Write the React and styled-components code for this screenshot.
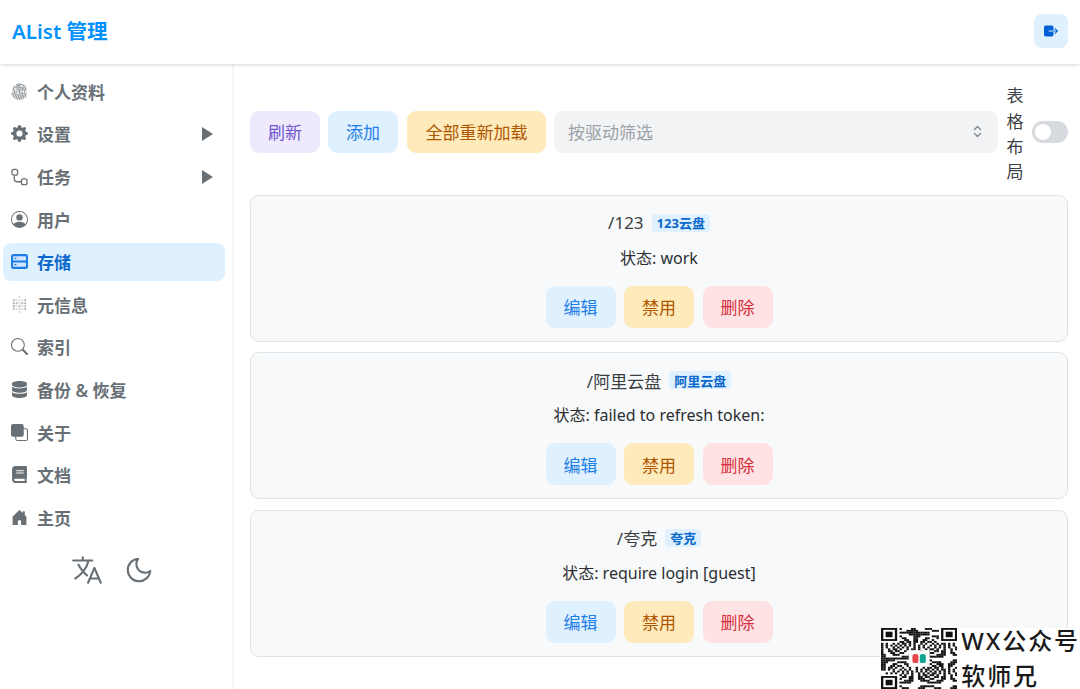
import styled, { createGlobalStyle } from "styled-components";
import {
  BsFingerprint,
  BsGearFill,
  BsPersonCircle,
  BsSearch,
  BsFront,
  BsHouseDoorFill,
} from "react-icons/bs";
import { SiMetabase } from "react-icons/si";
import { FaDatabase, FaBook } from "react-icons/fa";
import { IoLanguageOutline, IoExit } from "react-icons/io5";
import { FiMoon } from "react-icons/fi";
import { ChevronsUpDown } from "lucide-react";

const FONT = `"Noto Sans", "Noto Sans CJK SC", sans-serif`;

const GlobalStyle = createGlobalStyle`
  html, body {
    margin: 0;
    padding: 0;
    background: #fff;
    font-family: ${FONT};
  }
  * {
    box-sizing: border-box;
  }
`;

const Page = styled.div`
  position: relative;
  width: 1080px;
  height: 689px;
  overflow: hidden;
  display: flex;
  flex-direction: column;
  color: #11181c;
`;

const Header = styled.header`
  height: 64px;
  flex-shrink: 0;
  display: flex;
  align-items: center;
  justify-content: space-between;
  padding: 0 12px 4px;
  box-shadow: 0 1px 4px rgba(0, 0, 0, 0.16);
  position: relative;
  z-index: 1;
`;

const Logo = styled.div`
  font-size: 20.5px;
  font-weight: 600;
  color: #0091ff;
`;

const LogoutButton = styled.div`
  width: 34px;
  height: 34px;
  margin-top: 2px;
  border-radius: 8px;
  background: #dff0ff;
  color: #0060d8;
  display: flex;
  align-items: center;
  justify-content: center;
  font-size: 16px;
`;

const Body = styled.div`
  flex: 1;
  display: flex;
  min-height: 0;
`;

const Sidebar = styled.aside`
  width: 234px;
  flex-shrink: 0;
  border-right: 2px solid #f5f6f7;
  padding: 8.4px 7px 0 3px;
`;

const Nav = styled.nav`
  display: flex;
  flex-direction: column;
  gap: 4.6px;
`;

const NavItem = styled.div`
  height: 38px;
  display: flex;
  align-items: center;
  gap: 9px;
  padding: 0 12px 0 8px;
  border-radius: 8px;
  font-size: 17px;
  font-weight: 600;
  background: ${(props) => (props.$active ? "#dff0ff" : "transparent")};
  color: ${(props) => (props.$active ? "#0b68cb" : "#687076")};
`;

const NavIcon = styled.span`
  width: 17px;
  height: 18px;
  flex-shrink: 0;
  display: flex;
  align-items: center;
  justify-content: center;
  font-size: 17px;
  opacity: ${(props) => props.$fade || 1};
  color: ${(props) => (props.$active ? "#1c7ee6" : "inherit")};
`;

const NavLabel = styled.span`
  flex: 1;
`;

const Arrow = styled.span`
  width: 0;
  height: 0;
  border-style: solid;
  border-width: 7.5px 0 7.5px 11px;
  border-color: transparent transparent transparent #687076;
`;

const SideTools = styled.div`
  display: flex;
  justify-content: center;
  align-items: center;
  gap: 20px;
  margin-top: 16.6px;
  padding-right: 4px;
  color: #687076;
`;

const Main = styled.main`
  flex: 1;
  padding: 15.4px 12px 0 16px;
  display: flex;
  flex-direction: column;
  gap: 10.4px;
`;

const Toolbar = styled.div`
  display: flex;
  align-items: center;
  gap: 8px;
`;

const tones = {
  purple: "background: #eee9fd; color: #6e56cf;",
  blue: "background: #dff0ff; color: #1c7ee6;",
  orange: "background: #ffeabb; color: #ad5700;",
  red: "background: #ffe3e4; color: #d5303d;",
};

const Button = styled.button`
  height: 42px;
  padding: 0 18px;
  border: 0;
  border-radius: 9px;
  font-family: ${FONT};
  font-size: 17px;
  white-space: nowrap;
  flex-shrink: 0;
  ${(props) => tones[props.$tone]}
`;

const ReloadButton = styled(Button)`
  padding: 0 18.5px;
  margin-left: 1px;
`;

const Select = styled.div`
  flex: 1;
  height: 42px;
  border-radius: 9px;
  background: #f1f3f5;
  color: #9ba1a6;
  font-size: 17px;
  display: flex;
  align-items: center;
  justify-content: space-between;
  padding: 0 13px 0 14px;
`;

const SwitchLabel = styled.div`
  width: 18px;
  margin-top: 4px;
  font-size: 17px;
  line-height: 25.3px;
  color: #3c4145;
  text-align: center;
  flex-shrink: 0;
`;

const Switch = styled.div`
  width: 36px;
  height: 22px;
  border-radius: 11px;
  background: #d7dbdf;
  padding: 3px;
  flex-shrink: 0;
`;

const Knob = styled.div`
  width: 16px;
  height: 16px;
  border-radius: 50%;
  background: #fff;
`;

const CardList = styled.div`
  display: flex;
  flex-direction: column;
  gap: 10.5px;
`;

const Card = styled.section`
  height: 147px;
  border: 1px solid #dfe3e6;
  border-radius: 9px;
  background: #f8f9fa;
  display: flex;
  flex-direction: column;
  align-items: center;
  padding-top: 14px;
`;

const MountRow = styled.div`
  height: 26px;
  display: flex;
  align-items: center;
  gap: 8px;
  font-size: 17px;
  color: #3a3f42;
`;

const Badge = styled.span`
  height: 18px;
  padding: 0 5px;
  border-radius: 4px;
  background: #dff0ff;
  color: #0b68cb;
  font-size: 13px;
  font-weight: 700;
  display: flex;
  align-items: center;
`;

const Status = styled.div`
  margin-top: 9px;
  height: 26px;
  line-height: 26px;
  font-size: 16px;
  color: #2b2f32;
`;

const CardActions = styled.div`
  margin-top: 15px;
  display: flex;
  gap: 8.5px;
`;

const Watermark = styled.div`
  position: absolute;
  left: 880px;
  top: 628px;
  width: 200px;
  height: 61px;
  background: #fff;
  display: flex;
  gap: 4px;
  padding-left: 1px;
`;

const MarkText = styled.div`
  display: flex;
  flex-direction: column;
  gap: 11px;
  padding-top: 1px;
  font-size: 24px;
  font-weight: 500;
  color: #1a1a1a;
  white-space: nowrap;
  letter-spacing: 1.9px;
`;

const MarkLine = styled.div`
  height: 24px;
  line-height: 24px;
`;

// rough QR code drawing, the modules are not meant to scan
function QrCode() {
  const size = 33;
  const cells = [];
  const inFinder = (x, y) =>
    (x < 8 && y < 8) || (x > size - 9 && y < 8) || (x < 8 && y > size - 9);
  for (let y = 0; y < size; y++) {
    for (let x = 0; x < size; x++) {
      if (inFinder(x, y)) continue;
      if (((x * 7 + y * 13 + x * y * 3) * 2654435) % 97 < 46) {
        cells.push(<rect key={`${x}-${y}`} x={x} y={y} width="1.05" height="1.05" />);
      }
    }
  }
  const finder = (x, y) => (
    <g key={`${x}-${y}`}>
      <rect x={x + 0.5} y={y + 0.5} width="6" height="6" fill="none" stroke="#111" />
      <rect x={x + 2} y={y + 2} width="3" height="3" />
    </g>
  );
  return (
    <svg width="77" height="61" viewBox="0 0 33 33" preserveAspectRatio="none" fill="#111">
      {cells}
      {finder(0, 0)}
      {finder(26, 0)}
      {finder(0, 26)}
      <rect x="12" y="12" width="9" height="9" fill="#fff" />
      <rect x="13.6" y="14" width="2.6" height="5" rx="1.2" fill="#e5484d" />
      <rect x="16.8" y="14" width="2.6" height="5" rx="1.2" fill="#12a594" />
    </svg>
  );
}

function TaskIcon() {
  return (
    <svg width="18" height="18" viewBox="0 0 18 18" fill="none" stroke="currentColor" strokeWidth="1.4">
      <rect x="1" y="1" width="6" height="6" rx="2" />
      <rect x="11" y="11" width="6" height="6" rx="2" />
      <path d="M3.5 7v4.5a2.5 2.5 0 0 0 2.5 2.5h5" />
    </svg>
  );
}

function StorageIcon() {
  return (
    <svg width="17" height="15" viewBox="0 0 17 15">
      <rect width="17" height="15" rx="2.5" fill="currentColor" />
      <rect x="2" y="2.2" width="13" height="4.4" rx="0.8" fill="#cfe6fd" />
      <rect x="2" y="8.4" width="13" height="4.4" rx="0.8" fill="#cfe6fd" />
      <rect x="3.4" y="3.8" width="2" height="1.2" fill="currentColor" />
      <rect x="3.4" y="10" width="2" height="1.2" fill="currentColor" />
    </svg>
  );
}

const menu = [
  { label: "个人资料", icon: <BsFingerprint />, fade: 0.75 },
  { label: "设置", icon: <BsGearFill />, arrow: true },
  { label: "任务", icon: <TaskIcon />, arrow: true },
  { label: "用户", icon: <BsPersonCircle /> },
  { label: "存储", icon: <StorageIcon />, active: true },
  { label: "元信息", icon: <SiMetabase />, fade: 0.55 },
  { label: "索引", icon: <BsSearch /> },
  { label: "备份 & 恢复", icon: <FaDatabase /> },
  { label: "关于", icon: <BsFront /> },
  { label: "文档", icon: <FaBook /> },
  { label: "主页", icon: <BsHouseDoorFill /> },
];

const storages = [
  { path: "/123", driver: "123云盘", status: "状态: work" },
  { path: "/阿里云盘", driver: "阿里云盘", status: "状态: failed to refresh token:" },
  { path: "/夸克", driver: "夸克", status: "状态: require login [guest]" },
];

export default function App() {
  return (
    <>
      <GlobalStyle />
      <Page>
        <Header>
          <Logo>AList 管理</Logo>
          <LogoutButton>
            <IoExit />
          </LogoutButton>
        </Header>
        <Body>
          <Sidebar>
            <Nav>
              {menu.map((item) => (
                <NavItem key={item.label} $active={item.active}>
                  <NavIcon $active={item.active} $fade={item.fade}>
                    {item.icon}
                  </NavIcon>
                  <NavLabel>{item.label}</NavLabel>
                  {item.arrow && <Arrow />}
                </NavItem>
              ))}
            </Nav>
            <SideTools>
              <IoLanguageOutline size={34} />
              <FiMoon size={30} strokeWidth={1.7} />
            </SideTools>
          </Sidebar>
          <Main>
            <Toolbar>
              <Button $tone="purple">刷新</Button>
              <Button $tone="blue">添加</Button>
              <ReloadButton $tone="orange">全部重新加载</ReloadButton>
              <Select>
                按驱动筛选
                <ChevronsUpDown size={15} color="#787f85" />
              </Select>
              <SwitchLabel>表格布局</SwitchLabel>
              <Switch>
                <Knob />
              </Switch>
            </Toolbar>
            <CardList>
              {storages.map((item) => (
                <Card key={item.path}>
                  <MountRow>
                    {item.path}
                    <Badge>{item.driver}</Badge>
                  </MountRow>
                  <Status>{item.status}</Status>
                  <CardActions>
                    <Button $tone="blue">编辑</Button>
                    <Button $tone="orange">禁用</Button>
                    <Button $tone="red">删除</Button>
                  </CardActions>
                </Card>
              ))}
            </CardList>
          </Main>
        </Body>
        <Watermark>
          <QrCode />
          <MarkText>
            <MarkLine>WX公众号</MarkLine>
            <MarkLine>软师兄</MarkLine>
          </MarkText>
        </Watermark>
      </Page>
    </>
  );
}
